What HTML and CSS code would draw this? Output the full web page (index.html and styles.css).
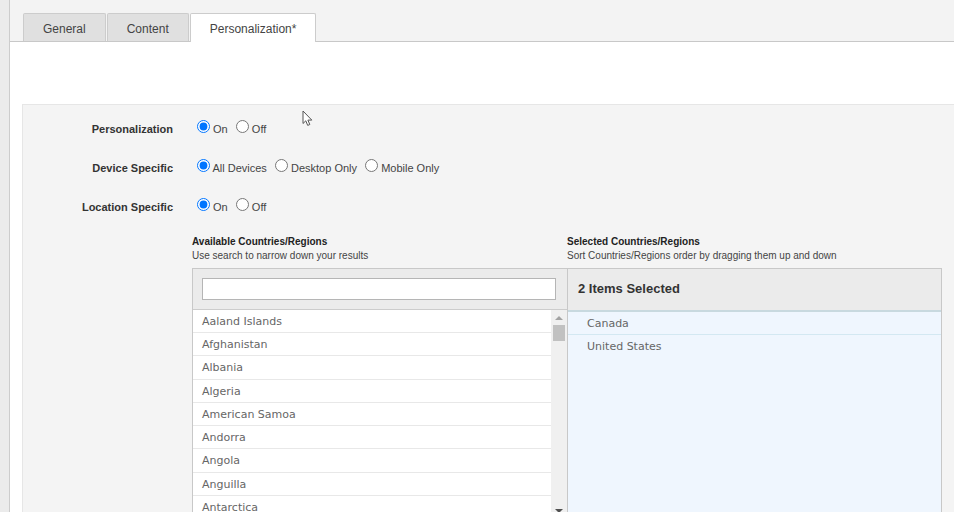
FILE: index.html
```html
<!DOCTYPE html>
<html lang="en">
<head>
    <meta charset="UTF-8">
    <meta name="viewport" content="width=device-width, initial-scale=1.0">
    <title>Personalization</title>
    <link rel="stylesheet" href="styles.css">
</head>
<body>
    <main class="page">
        <!-- Tabs -->
        <nav class="tabs">
            <a class="tab" href="#general">General</a>
            <a class="tab" href="#content">Content</a>
            <a class="tab active" href="#personalization">Personalization*</a>
        </nav>

        <form class="panel">
            <fieldset class="field">
                <legend class="field-name">Personalization</legend>
                <div class="options">
                    <label><input type="radio" name="personalization" checked> On</label>
                    <label><input type="radio" name="personalization"> Off</label>
                </div>
            </fieldset>
            <fieldset class="field">
                <legend class="field-name">Device Specific</legend>
                <div class="options">
                    <label><input type="radio" name="device" checked> All Devices</label>
                    <label><input type="radio" name="device"> Desktop Only</label>
                    <label><input type="radio" name="device"> Mobile Only</label>
                </div>
            </fieldset>
            <fieldset class="field">
                <legend class="field-name">Location Specific</legend>
                <div class="options">
                    <label><input type="radio" name="location" checked> On</label>
                    <label><input type="radio" name="location"> Off</label>
                </div>
            </fieldset>

            <!-- Country picker -->
            <div class="picker">
                <div class="picker-intro">
                    <label class="picker-title" for="search">Available Countries/Regions</label>
                    <p>Use search to narrow down your results</p>
                </div>
                <div class="picker-intro">
                    <h2 class="picker-title">Selected Countries/Regions</h2>
                    <p>Sort Countries/Regions order by dragging them up and down</p>
                </div>
                <section class="available">
                    <div class="search-bar">
                        <input class="search" id="search" type="text">
                    </div>
                    <div class="list-wrap">
                        <ul class="list">
                            <li>Aaland Islands</li>
                            <li>Afghanistan</li>
                            <li>Albania</li>
                            <li>Algeria</li>
                            <li>American Samoa</li>
                            <li>Andorra</li>
                            <li>Angola</li>
                            <li>Anguilla</li>
                            <li>Antarctica</li>
                        </ul>
                        <div class="scrollbar">
                            <span class="arrow-up"></span>
                            <span class="thumb"></span>
                            <span class="arrow-down"></span>
                        </div>
                    </div>
                </section>
                <section class="selected">
                    <h3 class="count">2 Items Selected</h3>
                    <ul class="selected-list">
                        <li>Canada</li>
                        <li>United States</li>
                    </ul>
                </section>
            </div>
        </form>
    </main>

    <!-- Mouse pointer -->
    <svg class="pointer" width="11" height="17" viewBox="0 0 11 17">
        <path d="M1 1V13.5L3.8 10.8L5.7 15.4L7.8 14.5L5.9 10.1H9.8Z" fill="#fff" stroke="#555" stroke-width="1"/>
    </svg>
</body>
</html>
```

FILE: styles.css
```css
* {
    margin: 0;
    padding: 0;
    box-sizing: border-box;
}

body {
    height: 100vh;
    overflow: hidden;
    padding-left: 9px;
    background: #ebebeb;
    font-family: "Liberation Sans", Arial, sans-serif;
    font-size: 11px;
    color: #444;
}

.page {
    min-height: 100vh;
    border-left: 1px solid #ccc;
    background: #fff;
}

/* Tabs */
.tabs {
    display: flex;
    align-items: flex-end;
    gap: 1px;
    height: 42px;
    padding-left: 13px;
    border-bottom: 1px solid #c8c8c8;
    background: #f3f3f3;
}

.tab {
    height: 28px;
    padding: 0 19px;
    border: 1px solid #ccc;
    border-bottom: 0;
    border-radius: 2px 2px 0 0;
    background: #e0e0e0;
    font-size: 12px;
    line-height: 30px;
    color: #444;
    text-decoration: none;
}

.tab.active {
    height: 29px;
    margin-bottom: -1px;
    background: #fff;
}

/* Form */
.panel {
    margin: 62px 0 0 12px;
    padding: 17px 12px 0 0;
    border: 1px solid #e6e6e6;
    border-right: 0;
    background: #f4f4f4;
}

.field {
    display: flow-root;
    height: 39px;
    border: 0;
    line-height: 14px;
}

.field-name {
    float: left;
    width: 150px;
    font-weight: bold;
    text-align: right;
    color: #333;
}

.options {
    margin: -2px 0 0 169px;
}

.options input {
    margin: 0 0 0 5px;
}

/* Country picker */
.picker {
    display: grid;
    grid-template-columns: 1fr 1fr;
    margin: -4px 0 0 169px;
}

.picker-intro {
    padding-bottom: 5px;
    font-size: 10px;
    line-height: 14px;
}

.picker-title {
    display: block;
    font-size: 10px;
    font-weight: bold;
    color: #222;
}

.available,
.selected {
    border: 1px solid #c8c8c8;
}

.available {
    border-right: 0;
}

.selected {
    background: #eff6fe;
}

.search-bar {
    height: 41px;
    padding: 9px 11px 0 9px;
    border-bottom: 1px solid #ccc;
    background: #ebebeb;
}

.search {
    display: block;
    width: 100%;
    height: 22px;
    padding: 0 4px;
    border: 1px solid #b5b5b5;
    background: #fff;
}

.list-wrap {
    display: flex;
    height: 209px;
    background: #fff;
}

.list {
    display: flex;
    flex: 1;
    flex-direction: column;
    list-style: none;
}

.list li,
.selected-list li {
    font-family: Verdana, "DejaVu Sans", sans-serif;
    font-size: 11px;
    line-height: 23px;
    color: #666;
}

.list li {
    flex: 1;
    min-height: 0;
    padding-left: 9px;
    border-bottom: 1px solid #e8e8e8;
}

.scrollbar {
    display: flex;
    flex-direction: column;
    align-items: center;
    width: 16px;
    padding: 6px 0;
    background: #f0f0f0;
}

.arrow-up,
.arrow-down {
    border: 4px solid transparent;
}

.arrow-up {
    border-top: 0;
    border-bottom-color: #a3a3a3;
}

.thumb {
    width: 12px;
    height: 16px;
    margin-top: 5px;
    background: #c1c1c1;
}

.arrow-down {
    margin-top: auto;
    border-bottom: 0;
    border-top-color: #505050;
}

.count {
    height: 43px;
    padding-left: 10px;
    border-bottom: 2px solid #c8d9df;
    background: #ebebeb;
    font-size: 13px;
    line-height: 39px;
    color: #333;
}

.selected-list {
    list-style: none;
}

.selected-list li {
    height: 23px;
    padding-left: 19px;
}

.selected-list li:first-child {
    border-bottom: 1px solid #d3e8f2;
}

.pointer {
    position: absolute;
    top: 110px;
    left: 302px;
}
```
